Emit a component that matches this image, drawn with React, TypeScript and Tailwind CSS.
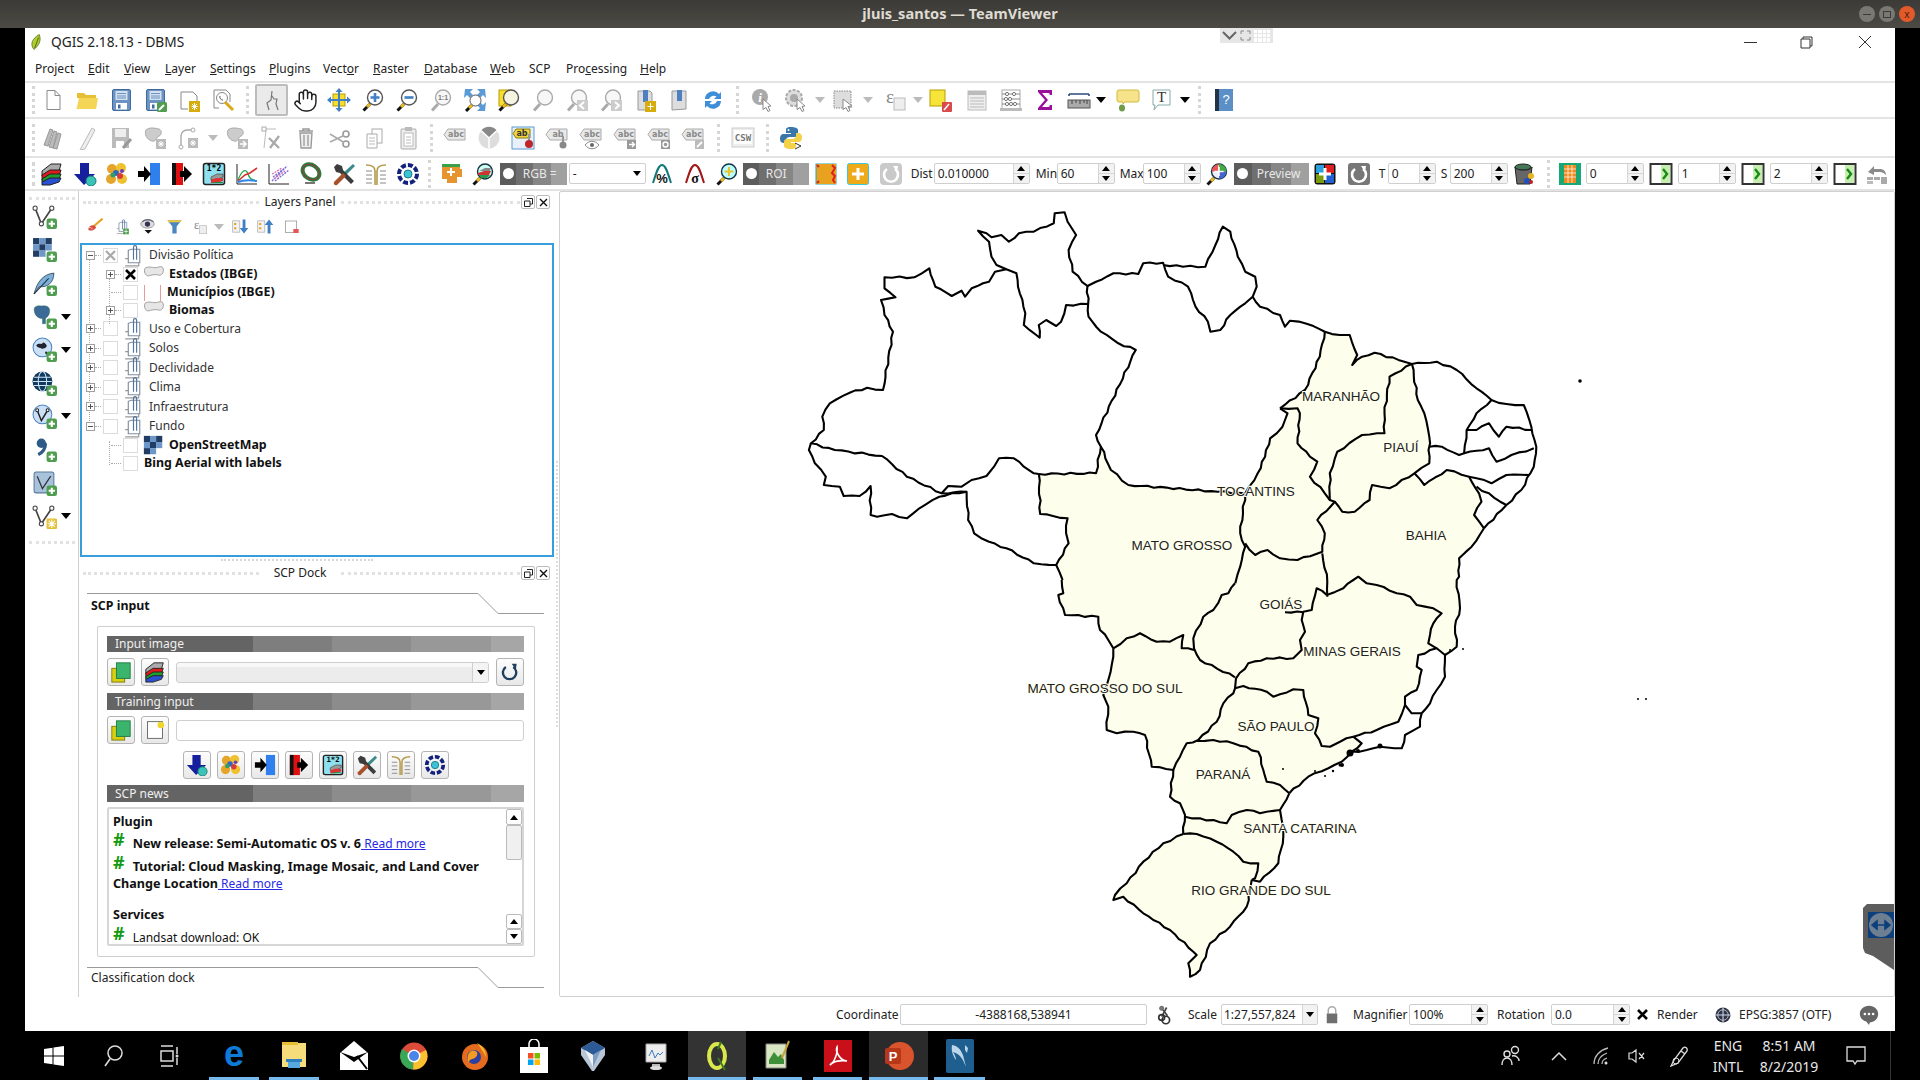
import React from 'react';
import { Hand } from 'lucide-react';

type P = [number, number];
const S = ({ s = 24, children }: { s?: number; children?: React.ReactNode }) => (
  <svg width={s} height={s} viewBox="0 0 24 24" className="block shrink-0">{children}</svg>
);
const mag = (lens: string, inner?: React.ReactNode, ring = '#555') => (
  <>
    <path d="M2.5 22.5L9 16" stroke="#111" strokeWidth="3" />
    <path d="M6 19L9 16" stroke="#e8b923" strokeWidth="3" />
    <circle cx="14" cy="9.5" r="7.5" fill={lens} stroke={ring} strokeWidth="1.4" />
    {inner}
  </>
);
const magGray = (inner?: React.ReactNode) => (
  <>
    <path d="M3 22.5L9 16" stroke="#aaa" strokeWidth="3" />
    <circle cx="14" cy="9.5" r="7.5" fill="#f7f7f7" stroke="#aaa" strokeWidth="1.4" />
    {inner}
  </>
);
const plus = <><rect x="14" y="14" width="10" height="10" rx="2" fill="#4f9e4f" /><path d="M19 16v6M16 19h6" stroke="#fff" strokeWidth="2" /></>;
const vnode = (c = '#444') => <path d="M3 4L9 19L19 4" fill="none" stroke={c} strokeWidth="1.6" />;
const vdots = <><circle cx="3" cy="4" r="2" fill="#fff" stroke="#444" /><circle cx="9" cy="19" r="2" fill="#fff" stroke="#444" /><circle cx="19" cy="4" r="2" fill="#fff" stroke="#444" /></>;
const abc = (t: string, c = '#aaa') => (
  <>
    <path d="M5 3h17v11H5L1 8.5z" fill="#e8e8e8" stroke={c} strokeWidth="1" />
    <text x="13" y="11" fontSize="8" fontWeight="700" textAnchor="middle" fill="#888" fontFamily="'DejaVu Sans'">{t}</text>
  </>
);
const floppy = (
  <>
    <rect x="3.5" y="1.5" width="18" height="21" rx="1.5" fill="#6b93c4" stroke="#3f6a9b" />
    <rect x="6.5" y="3" width="12" height="9" fill="#d5e0ee" />
    <path d="M8 5.5h9M8 8h9M8 10h9" stroke="#6b93c4" />
    <rect x="7" y="15" width="11" height="6.5" fill="#fff" />
    <rect x="9" y="16.5" width="2.5" height="4" fill="#3f6a9b" />
  </>
);
const stack = (
  <>
    <path d="M2 9L11 2h10l-2 7-9 5H2z" fill="#ababab" stroke="#222" />
    <path d="M2 13L10 8h11l-2 6-9 4H2z" fill="#e01b1b" stroke="#222" />
    <path d="M2 17L10 12h11l-2 5-9 3H2z" fill="#1f9d2f" stroke="#222" />
    <path d="M2 20L10 16h11l-2 4-9 3H2z" fill="#2a4fd1" stroke="#222" />
  </>
);
const yellowGreen = (
  <>
    <rect x="2" y="8" width="14" height="15" fill="#d8cf10" stroke="#7d7a0a" />
    <rect x="7" y="2" width="15" height="17" fill="#3bb56b" stroke="#1d7c43" />
  </>
);
const group = (
  <>
    <path d="M4 15h3M4 22h13v-3" fill="none" stroke="#999" strokeWidth="1.1" />
    <path d="M7 19V7l3-1h8v13z" fill="#fff" stroke="#7f8ea0" strokeWidth="1.1" />
    <path d="M12 16V4a1.500 1.500 0 0 1 3 0v12" fill="none" stroke="#4f739e" strokeWidth="1.1" />
  </>
);

const I: Record<string, React.ReactNode> = {
  qgis: <><path d="M8 22C2 15 6 7 15 2c3 8 0 14-7 20z" fill="#b3cc31" stroke="#4a6b14" /><path d="M9 20L14 6" stroke="#2e4a10" /></>,
  new: <><path d="M6 2.5h8l5 5v14H6z" fill="#fff" stroke="#8a8a8a" /><path d="M14 2.5v5h5" fill="none" stroke="#8a8a8a" /></>,
  open: <><path d="M2 10V5h7l2 2h10v4z" fill="#e6bf35" /><path d="M1.5 21L4 10h19l-2 11z" fill="#f5d556" /></>,
  save: floppy,
  saveas: <>{floppy}<rect x="14" y="14" width="10" height="10" rx="1.5" fill="#4f9e4f" /><path d="M16 22l5-5" stroke="#fff" strokeWidth="2" /></>,
  layout: <><path d="M4 4h12l4 4v7M11 21H4V4" fill="none" stroke="#888" /><rect x="12" y="13" width="11" height="11" fill="#d6ad0c" /><path d="M17.5 15v7M14.5 18.5h6M15 16l5 5M20 16l-5 5" stroke="#fff" /></>,
  manager: <><path d="M3 2h12l4 4v8M8 20H3V2" fill="none" stroke="#888" /><circle cx="11" cy="10" r="5.5" fill="#fff" stroke="#888" /><path d="M9 8a3 3 0 0 0 3 4" fill="none" stroke="#555" /><path d="M14 14l8 8" stroke="#d7aa1c" strokeWidth="3" /></>,
  touch: <path d="M12 3l-1 9-4 3 2 7M12 8l2 3h3l-1 5 2 6" fill="none" stroke="#777" strokeWidth="1.2" />,
  pansel: <><rect x="6" y="6" width="12" height="12" fill="#f7dd2e" stroke="#b99d00" /><path d="M12 0l3.5 4h-7zM12 24l3.5-4h-7zM0 12l4-3.5v7zM24 12l-4-3.5v7z" fill="#3f7fc4" /><path d="M12 4v16M4 12h16" stroke="#3f7fc4" strokeWidth="2" /></>,
  zin: mag('#fff', <path d="M14 5v9M9.5 9.5h9" stroke="#3f7fc4" strokeWidth="2.6" />),
  zout: mag('#fff', <path d="M9.5 9.5h9" stroke="#3f7fc4" strokeWidth="2.6" />),
  z11: magGray(<text x="14" y="12" fontSize="7" fontWeight="700" textAnchor="middle" fill="#777" fontFamily="'Liberation Sans'">1:1</text>),
  zfull: <><path d="M2 1h8L7 4l3 3-3 3-3-3-3 3zM22 1h-8l3 3-3 3 3 3 3-3 3 3zM22 23h-8l3-3-3-3 3-3 3 3 3-3z" fill="#5b9bd5" /><path d="M3 23l6-6" stroke="#111" strokeWidth="3" /><path d="M6 20l3-3" stroke="#e8b923" strokeWidth="3" /><circle cx="12.5" cy="12.5" r="5.5" fill="#fff" stroke="#555" /></>,
  zlayer: <><rect x="2" y="2" width="12" height="16" fill="#f7dd2e" stroke="#b99d00" />{mag('#f4f4e0')}</>,
  zsel: magGray(),
  zlast: <>{magGray()}<rect x="12" y="12" width="11" height="11" fill="#ccc" /><path d="M19 14l-4 3.5 4 3.5" fill="none" stroke="#fff" strokeWidth="2" /></>,
  znext: <>{magGray()}<rect x="12" y="12" width="11" height="11" fill="#ccc" /><path d="M16 14l4 3.5-4 3.5" fill="none" stroke="#fff" strokeWidth="2" /></>,
  bookstar: <><path d="M5 3h12l2 2v17H5z" fill="#ddd" stroke="#999" /><rect x="10" y="2" width="5" height="12" fill="#4c80c0" /><rect x="12" y="13" width="11" height="11" fill="#d6ad0c" /><path d="M17.5 15v7M14.5 18.5h6" stroke="#fff" /></>,
  book2: <><path d="M5 3h14v18l-14 1z" fill="#ddd" stroke="#999" /><rect x="10" y="2" width="5" height="11" fill="#4c80c0" /></>,
  refresh: <><path d="M4 11a8 8 0 0 1 14-5l2-2v7h-7l2.5-2.5A5 5 0 0 0 8 11z" fill="#3f8fd8" /><path d="M20 13a8 8 0 0 1-14 5l-2 2v-7h7l-2.5 2.5A5 5 0 0 0 16 13z" fill="#3f8fd8" /></>,
  identify: <><circle cx="10" cy="9" r="8" fill="#aaa" /><text x="10" y="14" fontSize="13" fontWeight="700" fontStyle="italic" textAnchor="middle" fill="#fff" fontFamily="'Liberation Serif'">i</text><path d="M13 11l8 7-3 .5 2 4-2 1-2-4-3 2z" fill="#fff" stroke="#888" /></>,
  action: <><circle cx="10" cy="10" r="8" fill="#ddd" stroke="#aaa" strokeWidth="2" strokeDasharray="3 1.5" /><circle cx="10" cy="10" r="4" fill="#aaa" /><path d="M13 11l8 7-3 .5 2 4-2 1-2-4-3 2z" fill="#fff" stroke="#888" /></>,
  select: <><rect x="2" y="3" width="17" height="17" fill="#ddd" stroke="#888" strokeDasharray="1.5 1" /><path d="M11 11l9 7-4 .5 2 4-2 1-2-4-3 2z" fill="#fff" stroke="#888" /></>,
  expr: <><text x="7" y="15" fontSize="19" textAnchor="middle" fill="#888" fontFamily="'Liberation Serif'">ε</text><rect x="11" y="10" width="11" height="12" fill="#eee" stroke="#bbb" /></>,
  desel: <><rect x="2" y="2" width="15" height="16" fill="#f7e43a" stroke="#b99d00" /><rect x="14" y="14" width="10" height="10" rx="1" fill="#d94b4b" /><path d="M16 22l5-6" stroke="#fff" strokeWidth="1.5" /></>,
  table: <><rect x="3" y="3" width="18" height="19" fill="#eee" stroke="#bbb" /><rect x="3" y="3" width="18" height="4" fill="#bbb" /><path d="M5 10h14M5 13h14M5 16h14M5 19h14" stroke="#bbb" /></>,
  abacus: <><rect x="3" y="2" width="18" height="19" fill="#fff" stroke="#aaa" /><rect x="1" y="20" width="22" height="3" fill="#bbb" /><path d="M3 6h18M3 11h18M3 16h18" stroke="#888" /><circle cx="8" cy="6" r="1.6" fill="#fff" stroke="#777" /><circle cx="15" cy="6" r="1.6" fill="#fff" stroke="#777" /><circle cx="7" cy="11" r="1.6" fill="#fff" stroke="#777" /><circle cx="11" cy="11" r="1.6" fill="#fff" stroke="#777" /><circle cx="8" cy="16" r="1.6" fill="#fff" stroke="#777" /><circle cx="12" cy="16" r="1.6" fill="#fff" stroke="#777" /><circle cx="16" cy="16" r="1.6" fill="#fff" stroke="#777" /></>,
  sigma: <path d="M5 2h14v5h-2l-1-2H9l6 7-6 7h7l1-2h2v5H5v-2l7-8-7-8z" fill="#9b109b" />,
  measure: <><path d="M2 6h20M2 6v2M22 6v2" stroke="#2d4b80" strokeWidth="1.6" /><rect x="1" y="12" width="22" height="8" fill="#aaa" stroke="#555" /><path d="M5 12v4M9 12v3M13 12v4M17 12v3M20 12v4" stroke="#444" /></>,
  tip: <><path d="M3 2h18a2 2 0 0 1 2 2v8a2 2 0 0 1-2 2H9l-2 2v-2H3a2 2 0 0 1-2-2V4a2 2 0 0 1 2-2z" fill="#f7e48a" stroke="#d1b93d" /><ellipse cx="6" cy="20" rx="3" ry="3.5" fill="#6f9c46" /></>,
  ttext: <><path d="M3 2h17v15H8l-4 5 1-5H3z" fill="#fff" stroke="#8aa" /><text x="11.5" y="14" fontSize="15" textAnchor="middle" fill="#333" fontFamily="'Liberation Serif'">T</text></>,
  help: <><rect x="3" y="1" width="18" height="22" fill="#5b8fc6" /><rect x="3" y="1" width="4" height="22" fill="#223247" /><text x="14" y="16" fontSize="13" textAnchor="middle" fill="#fff" fontFamily="'Liberation Sans'">?</text></>,
  pencils: <><path d="M3 19L9 3l3 1-5 16zM8 21l5-16 3 1-4 16zM12 22l5-15 3 1-4 15z" fill="#bbb" stroke="#999" /></>,
  pencil: <path d="M6 22L17 2l3 2L10 23l-5 1z" fill="#eee" stroke="#bbb" />,
  save2: <><path d="M3 2h17v20H3z" fill="#bbb" /><rect x="6" y="3" width="11" height="8" fill="#eee" /><rect x="7" y="15" width="8" height="7" fill="#fff" /><path d="M14 22l8-9" stroke="#999" strokeWidth="3" /></>,
  addfeat: <><path d="M3 4c3-3 9-2 13-1 3 1 3 6 0 7s-2 6-7 5-8-7-6-11z" fill="#ccc" stroke="#aaa" /><rect x="13" y="13" width="10" height="10" fill="#bbb" /><path d="M18 15v6M15 18h6M16 16l4 4M20 16l-4 4" stroke="#fff" /></>,
  node: <><path d="M4 21V10a6 6 0 0 1 6-6h6" fill="none" stroke="#aaa" strokeWidth="1.4" /><circle cx="4" cy="21" r="2" fill="#fff" stroke="#aaa" /><circle cx="16" cy="4" r="2" fill="#fff" stroke="#aaa" /><rect x="11" y="12" width="10" height="10" fill="#bbb" /><path d="M16 14v6M13 17h6M14 15l4 4M18 15l-4 4" stroke="#fff" /></>,
  move: <><path d="M3 4c3-3 9-2 13-1 3 1 3 6 0 7s-2 6-7 5-8-7-6-11z" fill="#ccc" stroke="#aaa" /><rect x="13" y="13" width="10" height="10" fill="#bbb" /><path d="M15 18h6M18 15l3 3-3 3" fill="none" stroke="#fff" strokeWidth="1.5" /></>,
  nodetool: <><path d="M5 3h12M7 4l-2 18" stroke="#bbb" fill="none" /><rect x="3" y="1" width="4" height="4" fill="#fff" stroke="#aaa" /><path d="M10 12l10 10M20 10L11 22" stroke="#aaa" strokeWidth="2.4" /></>,
  trash: <><path d="M5 5h14M9 5V3h6v2" fill="none" stroke="#999" strokeWidth="1.5" /><path d="M6 7h12l-1 15H7z" fill="#eee" stroke="#999" strokeWidth="1.3" /><path d="M10 9v11M14 9v11" stroke="#999" strokeWidth="1.3" /></>,
  scissors: <><circle cx="18" cy="8" r="3" fill="none" stroke="#999" strokeWidth="1.6" /><circle cx="18" cy="18" r="3" fill="none" stroke="#999" strokeWidth="1.6" /><path d="M16 9.5L2 16M16 16.5L2 8" stroke="#aaa" strokeWidth="1.6" /></>,
  copy: <><rect x="10" y="3" width="10" height="14" fill="#fff" stroke="#aaa" /><path d="M5 8h10v14H5z" fill="#fff" stroke="#aaa" /><path d="M7 12h6M7 15h6M7 18h6" stroke="#bbb" /></>,
  paste: <><rect x="5" y="3" width="15" height="20" rx="1" fill="#eee" stroke="#aaa" /><rect x="9" y="1" width="7" height="4" fill="#bbb" /><rect x="8" y="7" width="9" height="13" fill="#fff" stroke="#bbb" /><path d="M10 11h5M10 14h5M10 17h5" stroke="#bbb" /></>,
  abc1: abc('abc'),
  pie: <><circle cx="12" cy="12" r="10.5" fill="#ddd" /><path d="M12 12L4 4.5A10.5 10.5 0 0 1 20 4.5z" fill="#888" /><path d="M12 12v10" stroke="#fff" strokeWidth="1.5" /><path d="M12 12L4 4.5M12 12l8-7.5" stroke="#fff" strokeWidth="1.5" /></>,
  abpin: <><rect x="1" y="1" width="22" height="22" fill="#e8f1fb" stroke="#5b9bd5" /><path d="M5 3h14v9H5L2 7.5z" fill="#f2d43b" stroke="#8a7a10" /><text x="11" y="10" fontSize="8" fontWeight="700" textAnchor="middle" fill="#333" fontFamily="'DejaVu Sans'">ab</text><rect x="17" y="8" width="2" height="8" fill="#999" /><circle cx="18" cy="18" r="4" fill="#c0272d" /></>,
  abpin2: <>{abc('ab')}<rect x="17" y="10" width="2" height="7" fill="#999" /><circle cx="18" cy="19" r="3.5" fill="#888" /></>,
  abeye: <>{abc('abc')}<path d="M6 19c4-5 10-5 14 0-4 5-10 5-14 0z" fill="#fff" stroke="#888" /><circle cx="13" cy="19" r="2" fill="#666" /></>,
  abarrow: <>{abc('abc')}<rect x="14" y="14" width="9" height="9" fill="#999" /><path d="M16 18.5h5M19 16l2.5 2.5L19 21" fill="none" stroke="#fff" strokeWidth="1.4" /></>,
  abrot: <>{abc('abc')}<rect x="14" y="14" width="9" height="9" fill="#999" /><circle cx="18.5" cy="18.5" r="2.5" fill="none" stroke="#fff" strokeWidth="1.4" /></>,
  abpen: <>{abc('abc')}<rect x="14" y="14" width="9" height="9" fill="#bbb" /><path d="M16 21l5-5" stroke="#fff" strokeWidth="1.8" /></>,
  csw: <><rect x="1" y="2" width="22" height="19" fill="#eee" stroke="#ccc" /><rect x="3" y="4" width="18" height="14" fill="#fff" /><text x="12" y="15" fontSize="9" fontWeight="700" textAnchor="middle" fill="#777" fontFamily="'DejaVu Sans Mono'">CSW</text></>,
  python: <><path d="M12 1c-5 0-5 2-5 3v3h5v1H5c-3 0-4 2-4 5s2 4 4 4h2v-3c0-2 2-3 4-3h5c2 0 3-1 3-3V4c0-2-3-3-7-3z" fill="#3a77a8" /><path d="M12 23c5 0 5-2 5-3v-3h-5v-1h7c3 0 4-2 4-5s-2-4-4-4h-2v3c0 2-2 3-4 3H8c-2 0-3 1-3 3v4c0 2 3 3 7 3z" fill="#f4d147" /><circle cx="9.5" cy="4" r="1" fill="#fff" /><path d="M16 17l6 3-6 3" fill="none" stroke="#333" /></>,
  stack,
  download: <><path d="M7 1h9v11h6L11 23 1 12h6z" fill="#16209c" /><circle cx="18" cy="19" r="5" fill="#3cc3b8" stroke="#1c7d78" /></>,
  cluster: <><circle cx="7" cy="7" r="5" fill="#e5a52b" /><circle cx="16" cy="6" r="5" fill="#f0c12f" /><circle cx="6" cy="17" r="5" fill="#e5a52b" /><circle cx="17" cy="17" r="5" fill="#f0c12f" /><circle cx="11" cy="11" r="3" fill="#2e67c7" /><circle cx="15" cy="14" r="3" fill="#d83a3a" /><circle cx="8" cy="13" r="2.5" fill="#2e9f6b" /><circle cx="17" cy="9" r="2" fill="#6a3ebf" /></>,
  arrowin: <><rect x="13" y="1" width="10" height="22" fill="#2f80ed" /><path d="M1 9h6V4l7 8-7 8v-5H1z" fill="#000" /></>,
  redout: <><rect x="2" y="1" width="11" height="22" fill="#e11010" /><rect x="2" y="1" width="4" height="22" fill="#111" /><path d="M10 9h4V4l8 8-8 8v-5h-4z" fill="#000" /></>,
  calc: <><rect x="1.5" y="1.5" width="21" height="21" rx="2" fill="#8ee0ee" stroke="#222" strokeWidth="1.5" /><text x="12" y="9" fontSize="8" fontWeight="700" textAnchor="middle" fontFamily="'DejaVu Sans Mono'">1*2</text><path d="M9 15l6-3h6v3l-7 3H9z" fill="#999" stroke="#222" strokeWidth=".5" /><path d="M9 18l5-2h7v3l-7 2H9z" fill="#d33" /><path d="M9 21l5-1h7v1H9z" fill="#1a8f3a" /></>,
  plot: <><path d="M2 2v20h20" fill="none" stroke="#222" /><path d="M3 18c4-10 8-12 10-6s4 5 8 7" fill="none" stroke="#1fa84a" strokeWidth="1.3" /><path d="M3 19l7-6 5-2 7-5" fill="none" stroke="#d83030" strokeWidth="1.6" /><path d="M3 20c5-2 12-2 19-1" fill="none" stroke="#2e87e8" strokeWidth="2" /></>,
  scatter: <><path d="M2 2v20h20" fill="none" stroke="#222" /><path d="M5 19L20 4M6 15l12-9M8 19L22 8" stroke="#7c6cd6" strokeWidth="1.4" strokeDasharray="2 1" /><path d="M7 17L18 9M5 12l10-6" stroke="#d76cb0" strokeWidth="1.2" strokeDasharray="2 1" /></>,
  roiring: <><ellipse cx="12" cy="10" rx="9" ry="7" transform="rotate(35 12 10)" fill="none" stroke="#2d7a3d" strokeWidth="4" /><ellipse cx="12" cy="10" rx="9" ry="7" transform="rotate(35 12 10)" fill="none" stroke="#8a3f3f" strokeWidth="1" /><path d="M6 21h10" stroke="#777" strokeWidth="2" /></>,
  tools: <><path d="M21 2l2 2-10 10-3-2z" fill="#3a8a8a" /><path d="M2 5l3-3 5 2 1 4 11 11-3 3L8 11 4 10z" fill="#3c3c3c" /><path d="M2 20l9-9 3 3-9 9c-2 1-4-1-3-3z" fill="#a8502c" /></>,
  bookt: <><path d="M11 23V9C11 4 7 3 2 3M13 23V9c0-5 4-6 9-6" fill="none" stroke="#b39a4d" strokeWidth="1.6" /><path d="M2 9h6M2 13h6M2 17h6M2 21h6M16 9h6M16 13h6M16 17h6M16 21h6" stroke="#888" /></>,
  gear: <><circle cx="12" cy="12" r="9" fill="none" stroke="#12207e" strokeWidth="4" strokeDasharray="5 2" /><circle cx="12" cy="12" r="4" fill="#3cc3d8" stroke="#1c7d88" /></>,
  layerplus: <><path d="M3 2h18v5h2v8h-5v6H8v-4H3z" fill="#e59430" /><path d="M3 2h18v3H3z" fill="#3aa04a" /><path d="M8 10h8M12 6v8" stroke="#fff" strokeWidth="2" /></>,
  magrgb: <>{mag('#cfe', <><path d="M8 9l6-3h6l-1 3z" fill="#888" /><path d="M7 11l6-2h7l-2 4-11 0z" fill="#c33" /><path d="M8 13l11 0-3 3H10z" fill="#2a9a4a" /></>, '#134')}</>,
  pct: <><path d="M3 21C6 12 8 3 12 3s6 9 9 18" fill="none" stroke="#157a7a" strokeWidth="2" /><text x="12" y="21" fontSize="13" fontWeight="700" textAnchor="middle" fill="#111" fontFamily="'Liberation Sans'">%</text></>,
  sig: <><path d="M3 21C6 12 8 3 12 3s6 9 9 18" fill="none" stroke="#a01818" strokeWidth="2" /><text x="12" y="21" fontSize="14" fontWeight="700" textAnchor="middle" fill="#111" fontFamily="'Liberation Serif'">σ</text></>,
  magroi: mag('#bff', <path d="M14 5v9M9.5 9.5h9" stroke="#eec22f" strokeWidth="2" />, '#134'),
  polyx: <><rect x="2" y="2" width="20" height="20" fill="#e8a21f" stroke="#2aa6b8" /><path d="M2 2h20v20H2l6-5-2-5 3-5z" fill="#e8a21f" /><path d="M18 3l3 3-3 5 3 3-2 4 2 3M3 3l2 2M3 21l2-2" fill="none" stroke="#e02020" strokeWidth="2" /></>,
  oplus: <><rect x="1.5" y="1.5" width="21" height="21" rx="2" fill="#eeaa18" stroke="#3bc8dc" /><path d="M12 6v12M6 12h12" stroke="#fff" strokeWidth="3" /></>,
  undoG: <><rect x="1" y="1" width="22" height="22" rx="4" fill="#c9c9c9" /><path d="M8 7a7 7 0 1 0 8 0" fill="none" stroke="#fff" strokeWidth="2.6" /><path d="M14 4l5 0-1 6z" fill="#fff" /></>,
  magcolor: mag('#eef', <><path d="M14 2a7.5 7.5 0 0 0 0 7.5H7a7.5 7.5 0 0 1 7-7.5z" fill="#e55" /><path d="M14 2a7.5 7.5 0 0 1 7.5 7.5H14z" fill="#4a4" /><path d="M14 9.5h7.5a7.5 7.5 0 0 1-7.5 7.5z" fill="#46c" /><path d="M14 5v9M9.5 9.5h9" stroke="#fff" strokeWidth="1.5" /></>, '#134'),
  colorplus: <><rect x="1.5" y="1.5" width="21" height="21" rx="3" fill="#111" /><rect x="3" y="3" width="8" height="8" fill="#2aa0dd" /><rect x="12" y="3" width="9" height="8" fill="#e02020" /><rect x="3" y="12" width="8" height="9" fill="#7a9a10" /><rect x="12" y="12" width="9" height="9" fill="#2060d0" /><path d="M12 6v12M6 12h12" stroke="#fff" strokeWidth="3" /></>,
  undoD: <><rect x="1" y="1" width="22" height="22" rx="3" fill="#777" /><path d="M8 7a7 7 0 1 0 8 0" fill="none" stroke="#fff" strokeWidth="2.6" /><path d="M14 4l5 0-1 6z" fill="#fff" /></>,
  bin: <><ellipse cx="10" cy="5" rx="8" ry="3" fill="#475" stroke="#222" /><path d="M2 5l2 17h13l2-17a8 3 0 0 1-17 0z" fill="#666" stroke="#222" /><circle cx="18" cy="14" r="3" fill="#e8b31f" /><circle cx="14" cy="19" r="3" fill="#2050c0" /><circle cx="18" cy="20" r="2" fill="#c02020" /></>,
  gridO: <><rect x="1" y="1" width="22" height="22" fill="#18a878" /><rect x="6" y="3" width="12" height="18" fill="#f08a1f" /><path d="M6 7h12M6 11h12M6 15h12M10 3v18M14 3v18" stroke="#fff" strokeWidth=".7" /></>,
  gbtn: <><rect x="1.5" y="2" width="21" height="20" fill="#fff" stroke="#333" strokeWidth="2" /><rect x="12" y="3" width="9" height="18" fill="#c6eeb0" /><path d="M14 7l4 5-4 5" fill="none" stroke="#168a16" strokeWidth="2.4" /></>,
  lastg: <><path d="M3 10l6-6v3h6c3 0 6 2 6 6-2-2-4-3-6-3H9v3z" fill="#8a8a8a" /><rect x="2" y="15" width="6" height="3" fill="#aaa" /><rect x="9" y="15" width="6" height="3" fill="#aaa" /><rect x="2" y="19" width="6" height="3" fill="#bbb" /><rect x="16" y="15" width="6" height="7" fill="#aaa" /></>,
  vadd: <>{vnode()}{vdots}{plus}</>,
  radd: <><rect x="1" y="1" width="6" height="6" fill="#223d63" /><rect x="7" y="1" width="6" height="6" fill="#6c97c8" /><rect x="13" y="1" width="6" height="6" fill="#223d63" /><rect x="1" y="7" width="6" height="6" fill="#6c97c8" /><rect x="7" y="7" width="6" height="6" fill="#223d63" /><rect x="13" y="7" width="6" height="6" fill="#6c97c8" /><rect x="1" y="13" width="6" height="6" fill="#223d63" /><rect x="7" y="13" width="6" height="6" fill="#6c97c8" />{plus}</>,
  tile: <><rect x="1" y="1" width="7" height="7" fill="#223d63" /><rect x="8" y="1" width="7" height="7" fill="#6c97c8" /><rect x="15" y="1" width="7" height="7" fill="#223d63" /><rect x="1" y="8" width="7" height="7" fill="#6c97c8" /><rect x="8" y="8" width="7" height="7" fill="#223d63" /><rect x="15" y="8" width="7" height="7" fill="#6c97c8" /><rect x="1" y="15" width="7" height="7" fill="#223d63" /><rect x="8" y="15" width="7" height="7" fill="#6c97c8" /></>,
  feather: <><path d="M2 22C5 10 11 3 21 2c0 9-6 14-14 13z" fill="#7db0d8" stroke="#345" strokeWidth=".8" /><path d="M2 22L16 7" stroke="#234" />{plus}</>,
  pg: <><path d="M2 5c0-3 4-4 7-3 3-1 8 0 8 4 0 5-2 6-4 8v5h-3v-5c-4 0-8-3-8-9z" fill="#3c6a96" stroke="#163" strokeWidth=".3" />{plus}</>,
  wms: <><circle cx="10" cy="10" r="9" fill="#cbe0f5" stroke="#4f86c0" /><path d="M4 8c3-3 5 0 6-2s3 0 4 2-3 4-5 3-3 0-5-3zM13 14c2 0 3 1 2 3-2 0-3-1-2-3z" fill="#223" />{plus}</>,
  globe: <><circle cx="10" cy="10" r="9.5" fill="#123a5a" /><ellipse cx="10" cy="10" rx="4" ry="9.5" fill="none" stroke="#cfe6ff" /><path d="M1 10h18M2 6h16M2 14h16" stroke="#cfe6ff" />{plus}</>,
  wfs: <><circle cx="10" cy="10" r="9" fill="#cbe0f5" stroke="#4f86c0" /><path d="M5 6l4 10 6-10" fill="none" stroke="#222" strokeWidth="1.4" /><circle cx="5" cy="6" r="1.4" fill="#fff" stroke="#222" /><circle cx="15" cy="6" r="1.4" fill="#fff" stroke="#222" />{plus}</>,
  comma: <><circle cx="9" cy="6" r="4.5" fill="#2d5a86" /><path d="M13 6c0 6-3 9-7 11" fill="none" stroke="#2d5a86" strokeWidth="3" />{plus}</>,
  vmap: <><rect x="2" y="1" width="19" height="20" rx="2" fill="#a9c2dc" stroke="#5a7a9a" /><path d="M5 5l5 12 8-12" fill="none" stroke="#333" strokeWidth="1.2" />{plus}</>,
  vstar: <>{vnode()}{vdots}<rect x="14" y="14" width="10" height="10" rx="1" fill="#e6bf35" /><path d="M19 15v8M15 19h8M16 16l6 6M22 16l-6 6" stroke="#fff" /></>,
  brush: <><path d="M22 1L9 12" stroke="#e8a21f" strokeWidth="3" /><path d="M2 14c3-5 8-5 11-1-2 4-7 6-11 4z" fill="#d84a3a" /><path d="M2 14c2-1 4-1 6 2" fill="none" stroke="#fff" /></>,
  addg: <>{group}<rect x="13" y="15" width="8" height="8" fill="#4f9e4f" /><path d="M17 16v6M14 19h6" stroke="#fff" /></>,
  eye: <><ellipse cx="10" cy="8" rx="9" ry="5.5" fill="#ddd" stroke="#888" /><circle cx="10" cy="8" r="3.5" fill="#335" /><path d="M6 16l5 5 5-5z" fill="#111" /><path d="M3 5c5-4 11-3 15 0" fill="none" stroke="#667" strokeWidth="1.5" /></>,
  funnel: <><path d="M2 3h20l-7 9v10h-6V12z" fill="#4c86c0" /><path d="M2 3h20l-2 3H4z" fill="#f2c93b" /></>,
  expand: <><rect x="1" y="4" width="10" height="16" fill="#f3f3f3" stroke="#aaa" /><path d="M3 7h3v3H3zM3 13h3v3H3z" fill="#e8a21f" /><path d="M15 2v12H11l6 8 6-8h-4V2z" fill="#3f7fc4" /></>,
  collapse: <><rect x="1" y="4" width="10" height="16" fill="#f3f3f3" stroke="#aaa" /><path d="M3 7h3v3H3zM3 13h3v3H3z" fill="#e8a21f" /><path d="M15 22V10H11l6-8 6 8h-4v12z" fill="#3f7fc4" /></>,
  remove: <><rect x="2" y="3" width="17" height="17" fill="#fff" stroke="#888" /><rect x="14" y="15" width="8" height="6" fill="#e25555" /></>,
  yg: yellowGreen,
  newroi: <><rect x="3" y="2" width="18" height="20" fill="#fff" stroke="#555" /><circle cx="19" cy="6" r="4" fill="#f0d52a" /></>,
  undoB: <><path d="M7 6a8 8 0 1 0 9 0" fill="none" stroke="#1f3f5f" strokeWidth="2.8" /><path d="M14 2h6l-1 7z" fill="#1f3f5f" /></>,
  lockpad: <><path d="M7 10V6a5 5 0 0 1 10 0v4" fill="none" stroke="#aaa" strokeWidth="2" /><rect x="5" y="10" width="14" height="13" fill="#6e6e6e" /></>,
  rpen: <><path d="M8 4l7 9M14 3l-6 11" stroke="#444" strokeWidth="2" /><circle cx="8" cy="4" r="3" fill="#777" /><circle cx="13" cy="18" r="4.5" fill="none" stroke="#333" strokeWidth="2" /><circle cx="8" cy="15" r="3.5" fill="none" stroke="#333" strokeWidth="2" /></>,
  epsg: <><circle cx="12" cy="12" r="10" fill="#334" /><path d="M12 2v20M2 12h20" stroke="#cde" strokeWidth="1.4" /><path d="M12 5a7 7 0 0 0 0 14 7 7 0 0 0 0-14" fill="none" stroke="#cde" /></>,
  chat: <><path d="M12 2c6 0 10 4 10 9s-4 9-9 9l-1 3-3-4c-4-1-7-4-7-8 0-5 4-9 10-9z" fill="#666" /><circle cx="7.5" cy="11" r="1.4" fill="#fff" /><circle cx="12" cy="11" r="1.4" fill="#fff" /><circle cx="16.5" cy="11" r="1.4" fill="#fff" /></>,
};
const Ico = ({ n, s = 24 }: { n: string; s?: number }) => <S s={s}>{I[n]}</S>;

const Cell = ({ n, w = 'w-[34px]', c = '', s = 24 }: { n: string; w?: string; c?: string; s?: number }) => (
  <div className={`flex shrink-0 items-center justify-center ${w} ${c}`}><Ico n={n} s={s} /></div>
);
const Tri = ({ w = 'w-[14px]', gray = false, c = '' }: { w?: string; gray?: boolean; c?: string }) => (
  <div className={`flex shrink-0 items-center justify-center ${w} ${c}`}>
    <div className={`h-0 w-0 border-x-[5px] border-t-[6px] border-x-transparent ${gray ? 'border-t-[#bbb]' : 'border-t-black'}`} />
  </div>
);
const Sep = ({ w }: { w: string }) => (
  <div className={`flex shrink-0 justify-center ${w}`}><div className="h-[28px] w-0 border-l-[3px] border-dotted border-[#d6d6d6]" /></div>
);
const Band = ({ w, h, t, c = '' }: { w: string; h: string; t: string; c?: string }) => (
  <div className={`flex shrink-0 items-center bg-[linear-gradient(90deg,#646464_0_35%,#7e7e7e_35%_54%,#8c8c8c_54%_73%,#989898_73%_92%,#a6a6a6_92%)] text-[12px] text-[#f0f0f0] ${w} ${h} ${c}`}>{t}</div>
);
const Radio = ({ w, t, c = '' }: { w: string; t: string; c?: string }) => (
  <div className={`flex h-[22px] shrink-0 items-center bg-[linear-gradient(90deg,#5c5c5c_0_24%,#6f6f6f_24%_50%,#868686_50%_76%,#a0a0a0_76%)] pl-[2px] text-[12px] text-[#e8e8e8] ${w} ${c}`}>
    <div className="ml-[1px] mr-[9px] h-[11px] w-[11px] rounded-full bg-white" />{t}
  </div>
);
const Spin = ({ w, v, c = '', a = 'w-[16px]' }: { w: string; v: string; c?: string; a?: string }) => (
  <div className={`flex h-[21px] shrink-0 items-center overflow-hidden rounded-[2px] border border-[#cfcfcf] bg-white text-[12px] text-[#222] ${w} ${c}`}>
    <div className="flex-1 pl-[3px]">{v}</div>
    <div className={`flex h-full flex-col border-l border-[#d5d5d5] bg-[#f2f2f2] ${a}`}>
      <div className="flex flex-1 items-center justify-center border-b border-[#d5d5d5]"><div className="h-0 w-0 border-x-[4px] border-b-[5px] border-x-transparent border-b-black" /></div>
      <div className="flex flex-1 items-center justify-center"><div className="h-0 w-0 border-x-[4px] border-t-[5px] border-x-transparent border-t-black" /></div>
    </div>
  </div>
);
const Lbl = ({ w, t, c = '' }: { w: string; t: string; c?: string }) => <div className={`shrink-0 whitespace-nowrap text-[12px] text-[#222] ${w} ${c}`}>{t}</div>;

const menu: [string, string, string, string][] = [
  ['w-[53px]', 'Pro', 'j', 'ect'], ['w-[36px]', '', 'E', 'dit'], ['w-[41px]', '', 'V', 'iew'], ['w-[45px]', '', 'L', 'ayer'],
  ['w-[59px]', '', 'S', 'ettings'], ['w-[54px]', '', 'P', 'lugins'], ['w-[50px]', 'Vect', 'o', 'r'], ['w-[51px]', '', 'R', 'aster'],
  ['w-[66px]', '', 'D', 'atabase'], ['w-[39px]', '', 'W', 'eb'], ['w-[37px]', 'SCP', '', ''], ['w-[74px]', 'Pro', 'c', 'essing'], ['w-[40px]', '', 'H', 'elp'],
];

const DockHead = ({ t, c = '' }: { t: string; c?: string }) => (
  <div className={`flex h-[22px] shrink-0 items-center ${c}`}>
    <div className="ml-[3px] w-[176px] border-t-[3px] border-dotted border-[#e2e2e2]" />
    <div className="w-[82px] text-center text-[12px] text-[#222]">{t}</div>
    <div className="w-[179px] border-t-[3px] border-dotted border-[#e2e2e2]" />
    <div className="ml-[1px] flex h-[14px] w-[14px] items-center justify-center rounded-[2px] border border-[#bbb]">
      <svg width="9" height="9" viewBox="0 0 9 9"><path d="M3 .5h5.500V6H6M.5 3H6v5.500H.5z" fill="none" stroke="#222" /></svg>
    </div>
    <div className="ml-px flex h-[14px] w-[14px] items-center justify-center rounded-[2px] border border-[#bbb]">
      <svg width="9" height="9" viewBox="0 0 9 9"><path d="M1 1l7 7M8 1L1 8" stroke="#111" strokeWidth="1.4" /></svg>
    </div>
  </div>
);

const Check = ({ x = 0 }: { x?: 0 | 1 | 2 }) => (
  <div className="flex h-[15px] w-[15px] shrink-0 items-center justify-center border border-[#dcdcdc] bg-white">
    {x === 2 && <svg width="13" height="13" viewBox="0 0 13 13"><path d="M2 2l9 9M11 2l-9 9" stroke="#000" strokeWidth="2.6" /></svg>}
    {x === 1 && <svg width="13" height="13" viewBox="0 0 13 13"><path d="M2 2l9 9M11 2l-9 9" stroke="#aaa" strokeWidth="2.2" /></svg>}
  </div>
);
const Exp = ({ open = false, none = false }: { open?: boolean; none?: boolean }) => (
  <div className="flex w-[17px] shrink-0 items-center">
    {none ? <div className="w-[9px]" /> : (
      <div className="relative h-[9px] w-[9px] border border-[#a0a0a0] bg-white">
        <div className="absolute left-[1px] top-[3px] h-px w-[5px] bg-[#555]" />
        {!open && <div className="absolute left-[3px] top-[1px] h-[5px] w-px bg-[#555]" />}
      </div>
    )}
    <div className={`border-t border-dotted border-[#aaa] ${none ? 'ml-[-4px] w-[10px]' : 'w-[6px]'}`} />
  </div>
);
const blob = <path d="M2 5c3-3 8-1 11-1 4 0 8-3 9 1 1 5-2 8-5 7-4-1-8 0-11 1-4 0-5-5-4-8z" fill="#e6e6e6" stroke="#999" />;
const Row = ({ h, d, ex, x, ic, t, b, iw = 'w-[31px]' }: { h: string; d: 0 | 1; ex?: 'o' | 'c'; x?: 0 | 1 | 2; ic?: React.ReactNode; t: string; b?: boolean; iw?: string }) => (
  <div className={`flex shrink-0 items-center ${h}`}>
    <div className={d === 0 ? 'w-[4px] shrink-0' : 'w-[24px] shrink-0'} />
    <Exp open={ex === 'o'} none={!ex} />
    <Check x={x} />
    <div className={`flex shrink-0 items-center justify-center ${iw}`}>{ic}</div>
    <div className={`whitespace-nowrap ${b ? 'text-[12.4px] font-bold text-[#111]' : 'text-[12px] text-[#333]'}`}>{t}</div>
  </div>
);

const SBtn = ({ n, s = 22 }: { n: string; s?: number }) => (
  <div className="flex h-[28px] w-[28px] shrink-0 items-center justify-center rounded-[3px] border border-[#b4b4b4] bg-[linear-gradient(#fdfdfd,#e8e8e8)]"><Ico n={n} s={s} /></div>
);
const TabShape = () => (
  <svg width="460" height="21" viewBox="0 0 460 21" className="block shrink-0"><path d="M0 .5h391l20 20h46" fill="none" stroke="#9a9a9a" /></svg>
);
const Hash = () => <span className="mr-[8px] inline-block align-[2px] text-[18px] font-bold leading-[14px] text-[#129a12]">#</span>;
const A = ({ t }: { t: string }) => <span className="text-[12px] font-normal text-[#2a2ae6] underline">{t}</span>;

/* ---- map ---- */
const a = (p: number[][]): P[] => p.map(([x, y]) => [790 + x * 0.4975, 200 + y / 3]);
const b = (p: number[][]): P[] => p.map(([x, y]) => [1000 + x / 3, 580 + y / 3]);
const wig = (p: P[]): string => {
  const o: string[] = [];
  p.forEach((q, i) => {
    if (i === 0) { o.push(`M${q[0].toFixed(1)} ${q[1].toFixed(1)}`); return; }
    const r = p[i - 1]; const dx = q[0] - r[0]; const dy = q[1] - r[1]; const l = Math.hypot(dx, dy);
    if (l < 0.01) return;
    const n = Math.max(1, Math.floor(l / 6));
    for (let k = 1; k <= n; k++) {
      const t = k / n; const j = k === n ? 0 : Math.sin(q[0] * 1.7 + k * 2.3 + q[1]) * 0.9;
      o.push(`L${(r[0] + dx * t - (dy / l) * j).toFixed(1)} ${(r[1] + dy * t + (dx / l) * j).toFixed(1)}`);
    }
  });
  return o.join('');
};
const coastNE = a([[1075,395],[1105,405],[1125,405],[1140,465],[1130,495],[1150,470],[1175,458],[1235,485],[1250,492]]);
const piEast = a([[1250,492],[1262,600],[1275,640],[1285,710],[1285,790],[1255,820]]);
const baNorth = a([[1255,820],[1275,855],[1320,810],[1365,830],[1385,880],[1390,905],[1375,945],[1395,985]]);
const baCoast: P[] = [...a([[1395,985],[1370,1040],[1345,1075],[1345,1130]]), ...b([[1370,0],[1380,85],[1365,140],[1370,200],[1335,225]])];
const mgEast = b([[1335,225],[1310,205],[1255,225],[1250,260],[1265,270],[1250,330],[1215,350],[1215,375],[1195,425],[1130,450],[1060,470]]);
const spCoast = b([[1060,470],[1085,490],[1055,515],[1025,545],[985,565],[925,590],[868,640]]);
const scCoast = b([[868,640],[840,690],[845,720],[850,770],[835,850],[780,905],[755,900]]);
const rsOut = b([[755,900],[740,980],[690,1040],[630,1090],[600,1170],[570,1190],[565,1150],[590,1125],[580,1115],[510,1050],[460,1020],[430,1000],[370,950],[340,960],[345,945],[380,910],[430,845],[490,790],[550,762]]);
const prW = b([[550,762],[555,705],[540,670],[510,650],[520,570]]);
const msS = b([[520,570],[455,560],[435,465],[400,455],[350,460],[320,450],[325,380],[310,345],[325,300],[340,230],[340,205]]);
const mtSW = b([[340,205],[325,180],[300,150],[295,110],[195,105],[175,45],[190,40],[185,0]]);
const mtW = a([[548,1140],[535,1095],[560,1030],[555,1000],[558,955],[503,942],[500,822]]);
const mtN = a([[500,822],[615,820],[625,740],[645,810],[680,855],[860,875],[915,880]]);
const toW = a([[915,880],[940,820],[955,770],[965,715],[990,680],[1000,640],[985,625]]);
const maW = a([[985,625],[1035,570],[1065,470],[1075,395]]);
const fillPath = wig([...coastNE, ...piEast, ...baNorth, ...baCoast, ...mgEast, ...spCoast, ...scCoast, ...rsOut, ...prW, ...msS, ...mtSW, ...mtW, ...mtN, ...toW, ...maW]);
const lines: P[][] = [
  coastNE, piEast, baNorth, baCoast, mgEast, spCoast, scCoast, rsOut, prW, msS, mtSW, mtW, mtN, toW, maW,
  // Roraima
  a([[598,258],[568,215],[560,150],[575,105],[558,65],[552,37],[532,40],[530,70],[490,95],[460,100],[440,125],[425,105],[405,112],[395,100],[378,92],[400,125],[405,170],[415,195],[435,208],[455,220],[462,280],[473,340],[470,375],[495,405],[502,413],[500,375],[515,360],[535,378],[545,365],[555,315],[600,312]]),
  // Amazonas
  a([[435,208],[412,215],[400,245],[365,265],[352,290],[345,272],[325,288],[292,260],[280,205],[265,220],[250,232],[190,232],[190,265],[212,292],[183,300],[190,345],[207,395],[187,570],[155,563],[120,578],[80,610],[65,650],[68,690],[42,730],[90,750],[185,768],[235,830],[305,880],[318,858],[345,860],[365,840],[395,828],[410,800],[420,775],[450,775],[470,800],[490,820],[500,822]]),
  // Para west
  a([[598,258],[600,350],[625,395],[660,430],[695,450],[615,705],[625,740]]),
  // Acre
  a([[42,730],[38,750],[50,790],[72,830],[68,855],[100,860],[108,888],[140,888],[162,858],[162,945],[175,950],[205,942],[235,955],[260,925],[300,890],[325,880],[355,875]]),
  // Rondonia
  a([[305,880],[355,875],[358,960],[370,1000],[400,1025],[435,1045],[490,1090],[535,1095]]),
  // Para north + Amapa
  a([[598,258],[615,245],[650,220],[700,222],[710,190],[750,188],[760,230],[800,260],[815,320],[840,365],[845,395],[865,390],[885,345],[915,310],[930,290],[938,260],[935,230],[915,215],[900,170],[885,95],[870,80],[855,135],[835,200],[790,200],[750,195]]),
  a([[930,290],[945,320],[985,345],[995,380],[1005,362],[1040,372],[1075,395]]),
  // To east
  a([[985,625],[1020,625],[1025,640],[1020,730],[1045,770],[1060,785],[1045,830],[1075,880],[1085,900],[1095,905],[1060,960],[1075,1000],[1070,1055],[1020,1080],[985,1075],[960,1050],[935,1065],[915,1030]]),
  a([[915,880],[905,1000],[915,1040],[905,1100],[895,1150]]),
  // Ma/Pi
  a([[1250,492],[1205,530],[1195,640],[1195,700],[1150,705],[1100,755],[1085,820],[1085,900]]),
  a([[1095,905],[1110,935],[1135,935],[1165,900],[1170,855],[1205,865],[1255,820]]),
  // Ba west
  a([[1070,1060],[1080,1145],[1080,1190]]),
  // NE
  a([[1250,492],[1300,485],[1340,510],[1380,565],[1410,600],[1440,612],[1475,615],[1490,680],[1500,740],[1495,800],[1470,870],[1440,915],[1395,985]]),
  a([[1410,600],[1380,640],[1360,690],[1355,760],[1345,765],[1310,740],[1285,740]]),
  a([[1490,690],[1440,680],[1425,710],[1405,670],[1380,690],[1360,690]]),
  a([[1495,745],[1450,765],[1420,785],[1405,745],[1355,760]]),
  a([[1365,830],[1380,835],[1410,850],[1440,825],[1485,825]]),
  a([[1380,860],[1440,915]]),
  // Goias
  b([[705,10],[685,40],[665,45],[640,90],[610,110],[580,175],[582,205],[600,240],[705,292]]),
  b([[582,210],[545,205],[550,165],[510,185],[470,185],[420,160],[380,175],[340,205]]),
  b([[980,45],[950,25],[938,70],[935,90],[910,95],[905,120],[915,155],[900,180],[905,210],[880,235],[800,235],[745,250],[708,295],[705,325],[700,340],[670,370],[650,425],[595,480]]),
  b([[855,97],[910,97]]),
  // Ba/Mg
  b([[980,45],[1030,25],[1060,0],[1075,-10],[1100,10],[1130,15],[1190,40],[1230,50],[1250,75],[1300,85],[1325,100],[1300,130],[1290,165],[1285,190],[1310,205]]),
  // Sp
  b([[705,325],[730,318],[800,335],[820,350],[880,328],[910,330],[925,405],[955,415],[945,460],[965,498],[990,500],[1020,485],[1060,470]]),
  // Es/Rj
  b([[1335,225],[1335,290],[1310,330],[1290,370],[1265,400],[1260,440],[1215,465],[1205,505],[1140,500],[1100,510],[1055,515]]),
  b([[1215,375],[1235,400],[1265,400]]),
  // Pr
  b([[595,480],[560,490],[540,530],[520,570]]),
  b([[590,483],[640,480],[700,490],[775,515],[790,570],[800,605],[840,615],[868,640]]),
  b([[555,710],[600,715],[680,730],[695,705],[740,690],[780,700],[840,690]]),
  b([[550,762],[590,762],[650,785],[700,815],[730,845],[775,850],[765,895],[755,900]]),
];
const dots: [number, number, number][] = [[1580,381,1.8],[1463,649,1],[1638,699,1],[1646,699,1],[1350,753,3.5],[1358,751,2],[1380,746,2.5],[1342,765,2],[1315,771,1],[1325,776,1],[1333,771,1.2],[1340,765,1.5],[1450,650,1],[1283,769,1]];
const labels: [string, number, number][] = [
  ['MARANHÃO', 1341, 396], ['PIAUÍ', 1401, 447], ['TOCANTINS', 1256, 491], ['MATO GROSSO', 1182, 545], ['BAHIA', 1426, 535],
  ['GOIÁS', 1281, 604], ['MINAS GERAIS', 1352, 651], ['MATO GROSSO DO SUL', 1105, 688], ['SÃO PAULO', 1276, 726], ['PARANÁ', 1223, 774],
  ['SANTA CATARINA', 1300, 828], ['RIO GRANDE DO SUL', 1261, 890],
];
const BrazilMap = () => (
  <svg width="1335" height="805" viewBox="560 192 1335 805" className="block">
    <path d={fillPath} fill="#fefeec" />
    {lines.map((l, i) => <path key={i} d={wig(l)} fill="none" stroke="#000" strokeWidth="2.1" strokeLinejoin="round" />)}
    {dots.map(([x, y, r], i) => <circle key={i} cx={x} cy={y} r={r} fill="#000" />)}
    {labels.map(([t, x, y]) => (
      <text key={t} x={x} y={y + 5} textAnchor="middle" fontSize="13.5" fill="#222" stroke="#fefeec" strokeWidth="2" paintOrder="stroke" fontFamily="'Liberation Sans', Arial, sans-serif">{t}</text>
    ))}
  </svg>
);

function Task({ w, c = '', line = false, children }: { w: string; c?: string; line?: boolean; children?: React.ReactNode }) {
  return (
    <div className={`relative flex h-full shrink-0 items-center justify-center ${w} ${c}`}>
      {children}
      {line && <div className="absolute inset-x-0 bottom-0 h-[3px] bg-[#76b9ed]" />}
    </div>
  );
}

export default function App() {
  return (
    <div className="relative flex h-[1080px] w-[1920px] flex-col overflow-hidden bg-black [font-family:'Noto_Sans',sans-serif]">
      {/* ubuntu title */}
      <div className="relative flex h-[28px] shrink-0 items-center justify-center bg-[linear-gradient(#3b3a36,#4c4a45)]">
        <div className="text-[14.6px] font-bold text-[#dfdbd2]">jluis_santos — TeamViewer</div>
        <div className="absolute right-[5px] top-[6px] flex gap-[4px]">
          <div className="flex h-[16px] w-[16px] items-center justify-center rounded-full bg-[#7a7872]"><div className="h-px w-[8px] bg-[#3c3b37]" /></div>
          <div className="flex h-[16px] w-[16px] items-center justify-center rounded-full bg-[#7a7872]"><div className="h-[7px] w-[8px] border border-[#3c3b37]" /></div>
          <div className="flex h-[16px] w-[16px] items-center justify-center rounded-full bg-[#e2592a] text-[10px] leading-none text-[#4a2010]">x</div>
        </div>
      </div>
      <div className="flex min-h-0 flex-1">
        <div className="w-[25px] shrink-0" />
        <div className="relative flex w-[1870px] flex-col bg-white">
          {/* TeamViewer handle */}
          <div className="absolute left-[1195px] top-0 flex h-[15px] w-[53px] items-center gap-[3px] bg-[#e6e6e6] pl-[2px]">
            <svg width="15" height="9" viewBox="0 0 15 9"><path d="M1 1l6.500 6.500L14 1" fill="none" stroke="#666" strokeWidth="2" /></svg>
            <svg width="11" height="11" viewBox="0 0 11 11"><path d="M1 4V1h3M7 1h3v3M10 7v3H7M4 10H1V7" fill="none" stroke="#888" /></svg>
            <div className="grid h-[12px] w-[16px] grid-cols-4 gap-px">{Array.from({ length: 12 }).map((_, i) => <div key={i} className="bg-white" />)}</div>
          </div>
          {/* QGIS title */}
          <div className="flex h-[28px] shrink-0 items-center pl-[3px]">
            <Ico n="qgis" s={18} />
            <div className="ml-[5px] text-[13.7px] text-[#222]">QGIS 2.18.13 - DBMS</div>
            <div className="ml-auto flex items-center pr-[23px]">
              <div className="h-px w-[13px] bg-[#333]" />
              <svg width="13" height="13" viewBox="0 0 13 13" className="ml-[43px]"><path d="M3 3V1h9v9h-2M1 3h9v9H1z" fill="none" stroke="#333" /></svg>
              <svg width="14" height="14" viewBox="0 0 14 14" className="ml-[45px]"><path d="M1 1l12 12M13 1L1 13" stroke="#333" /></svg>
            </div>
          </div>
          {/* menu */}
          <div className="flex h-[25px] shrink-0 items-center pl-[10px] text-[12px] text-[#222]">
            {menu.map(([w, p, u, e]) => <div key={p + u + e} className={`shrink-0 ${w}`}>{p}{u && <u>{u}</u>}{e}</div>)}
          </div>
          {/* toolbar 1 */}
          <div className="flex h-[38px] shrink-0 items-center border-y-2 border-[#e3e3e3] pl-[7px]">
            <div className="mr-[1px] h-[28px] w-[3px] border-l-[3px] border-dotted border-[#d6d6d6]" />
            {['new', 'open', 'save', 'saveas', 'layout', 'manager'].map((n) => <Cell key={n} n={n} />)}
            <Sep w="w-[15px]" />
            <div className="flex h-[32px] w-[33px] shrink-0 items-center justify-center rounded-[2px] border-2 border-[#bdbdbd] bg-[#eaeaea]"><Ico n="touch" /></div>
            <div className="flex w-[34px] shrink-0 items-center justify-center"><Hand size={25} strokeWidth={1.4} color="#222" /></div>
            {['pansel', 'zin', 'zout', 'z11', 'zfull', 'zlayer', 'zsel', 'zlast', 'znext', 'bookstar', 'book2', 'refresh'].map((n) => <Cell key={n} n={n} />)}
            <Sep w="w-[15px]" />
            <Cell n="identify" />
            <Cell n="action" /><Tri gray />
            <Cell n="select" /><Tri gray />
            <Cell n="expr" c="ml-[3px]" /><Tri gray w="w-[11px]" />
            <Cell n="desel" />
            <Cell n="table" c="ml-[3px]" />
            <Cell n="abacus" />
            <Cell n="sigma" />
            <Cell n="measure" /><Tri w="w-[10px]" />
            <Cell n="tip" c="ml-[5px]" />
            <Cell n="ttext" /><Tri w="w-[12px]" />
            <Sep w="w-[16px]" />
            <Cell n="help" />
          </div>
          {/* toolbar 2 */}
          <div className="flex h-[37px] shrink-0 items-center pl-[7px]">
            <div className="mr-[1px] h-[28px] w-[3px] border-l-[3px] border-dotted border-[#d6d6d6]" />
            {['pencils', 'pencil', 'save2', 'addfeat', 'node'].map((n) => <Cell key={n} n={n} />)}
            <Tri gray />
            {['move', 'nodetool'].map((n) => <Cell key={n} n={n} />)}
            <div className="w-px shrink-0" />
            {['trash', 'scissors', 'copy', 'paste'].map((n) => <Cell key={n} n={n} />)}
            <Sep w="w-[13px]" />
            {['abc1', 'pie', 'abpin', 'abpin2', 'abeye', 'abarrow', 'abrot', 'abpen'].map((n) => <Cell key={n} n={n} />)}
            <Sep w="w-[16px]" />
            <Cell n="csw" />
            <Sep w="w-[14px]" />
            <Cell n="python" />
          </div>
          {/* toolbar 3 */}
          <div className="flex h-[35px] shrink-0 items-center border-y-2 border-[#e3e3e3] pl-[7px]">
            <div className="mr-[1px] h-[24px] w-[3px] border-l-[3px] border-dotted border-[#d6d6d6]" />
            {['stack', 'download', 'cluster', 'arrowin', 'redout', 'calc', 'plot', 'scatter', 'roiring', 'tools', 'bookt', 'gear'].map((n) => <Cell key={n} n={n} w="w-[32.4px]" />)}
            <Sep w="w-[10px]" />
            <Cell n="layerplus" w="w-[32px]" />
            <Cell n="magrgb" w="w-[32px]" />
            <Radio w="w-[67px]" t="RGB =" c="ml-px" />
            <div className="ml-[2px] flex h-[21px] w-[77px] shrink-0 items-center rounded-[2px] border border-[#cfcfcf] bg-white pl-[3px] text-[12px] text-[#222]">-<div className="ml-auto mr-[4px] h-0 w-0 border-x-[4px] border-t-[5px] border-x-transparent border-t-black" /></div>
            <Cell n="pct" w="w-[32px]" />
            <Cell n="sig" w="w-[32px]" c="ml-px" />
            <Cell n="magroi" w="w-[32px]" />
            <Radio w="w-[66px]" t="ROI" />
            <Cell n="polyx" w="w-[32px]" c="ml-px" />
            <Cell n="oplus" w="w-[32px]" />
            <Cell n="undoG" w="w-[32px]" c="ml-px" />
            <Lbl w="w-[23px]" t="Dist" c="ml-[4px]" />
            <Spin w="w-[96px]" v="0.010000" />
            <Lbl w="w-[21px]" t="Min" c="ml-[6px]" />
            <Spin w="w-[58px]" v="60" />
            <Lbl w="w-[23px]" t="Max" c="ml-[5px]" />
            <Spin w="w-[58px]" v="100" />
            <Cell n="magcolor" w="w-[32px]" />
            <Radio w="w-[75px]" t="Preview" c="ml-px" />
            <Cell n="colorplus" w="w-[32px]" />
            <Cell n="undoD" w="w-[32px]" c="ml-[2px]" />
            <Lbl w="w-[9px]" t="T" c="ml-[4px]" />
            <Spin w="w-[48px]" v="0" />
            <Lbl w="w-[9px]" t="S" c="ml-[5px]" />
            <Spin w="w-[58px]" v="200" />
            <Cell n="bin" w="w-[32px]" c="ml-px" />
            <Sep w="w-[15px]" />
            <Cell n="gridO" w="w-[28px]" />
            <Spin w="w-[58px]" v="0" c="ml-[2px]" />
            <Cell n="gbtn" w="w-[34px]" />
            <Spin w="w-[58px]" v="1" />
            <Cell n="gbtn" w="w-[34px]" />
            <Spin w="w-[58px]" v="2" />
            <Cell n="gbtn" w="w-[34px]" />
            <Cell n="lastg" w="w-[30px]" />
          </div>
          {/* main */}
          <div className="flex min-h-0 flex-1">
            {/* left toolbar */}
            <div className="flex w-[54px] shrink-0 flex-col border-r border-[#cfcfcf] pt-[6px]">
              <div className="ml-[4px] h-[3px] w-[46px] shrink-0 border-t-[3px] border-dotted border-[#e2e2e2]" />
              {[['vadd', 0], ['radd', 0], ['feather', 0], ['pg', 1], ['wms', 1], ['globe', 0], ['wfs', 1], ['comma', 0], ['vmap', 0], ['vstar', 1]].map(([n, t]) => (
                <div key={n as string} className="flex h-[33.3px] shrink-0 items-center pl-[7px]">
                  <Ico n={n as string} s={25} />
                  {t ? <Tri w="w-[12px]" c="ml-[3px]" /> : null}
                </div>
              ))}
              <div className="ml-[4px] mt-[8px] h-[3px] w-[46px] shrink-0 border-t-[3px] border-dotted border-[#e2e2e2]" />
            </div>
            {/* docks */}
            <div className="flex w-[475px] shrink-0 flex-col pl-px">
              <DockHead t="Layers Panel" />
              <div className="flex h-[30px] shrink-0 items-center pb-[3px]">
                <Cell n="brush" w="w-[26px]" s={17} c="ml-[2px]" />
                <Cell n="addg" w="w-[28px]" s={17} />
                <Cell n="eye" w="w-[26px]" s={18} />
                <Cell n="funnel" w="w-[25px]" s={17} />
                <Cell n="expr" w="w-[25px]" s={16} />
                <Tri gray w="w-[14px]" />
                <Cell n="expand" w="w-[24px]" s={17} c="ml-[2px]" />
                <Cell n="collapse" w="w-[27px]" s={17} />
                <Cell n="remove" w="w-[25px]" s={16} />
              </div>
              <div className="relative flex h-[314px] w-[474px] shrink-0 flex-col border-2 border-[#389ddb] bg-white">
                <div className="absolute left-[7px] top-[11px] h-[173px] w-0 border-l border-dotted border-[#aaa]" />
                <div className="absolute left-[27px] top-[29px] h-[50px] w-0 border-l border-dotted border-[#aaa]" />
                <div className="absolute left-[27px] top-[196px] h-[24px] w-0 border-l border-dotted border-[#aaa]" />
                <Row h="h-[20px]" d={0} ex="o" x={1} ic={<S s={25}>{group}</S>} t="Divisão Política" />
                <Row h="h-[19px]" d={1} ex="c" x={2} ic={<S s={22}>{blob}</S>} t="Estados (IBGE)" b />
                <Row h="h-[17px]" d={1} iw="w-[29px]" ic={<div className="h-[16px] w-[17px] border-x border-[#e89a9a]" />} t="Municípios (IBGE)" b />
                <Row h="h-[18px]" d={1} ex="c" ic={<S s={22}>{blob}</S>} t="Biomas" b />
                {['Uso e Cobertura', 'Solos', 'Declividade', 'Clima', 'Infraestrutura'].map((t) => (
                  <Row key={t} h="h-[19.5px]" d={0} ex="c" ic={<S s={25}>{group}</S>} t={t} />
                ))}
                <Row h="h-[19.5px]" d={0} ex="o" ic={<S s={25}>{group}</S>} t="Fundo" />
                <Row h="h-[19px]" d={1} ic={<S s={21}>{I.tile}</S>} t="OpenStreetMap" b />
                <Row h="h-[17px]" d={1} iw="w-[6px]" t="Bing Aerial with labels" b />
              </div>
              <div className="flex h-[5px] shrink-0 items-center justify-center"><div className="mr-[40px] w-[152px] border-t-[2px] border-dotted border-[#d8d8d8]" /></div>
              <DockHead t="SCP Dock" />
              {/* SCP input */}
              <div className="mt-[9px] pl-[7px]"><TabShape /></div>
              <div className="ml-[11px] mt-[-17px] h-[21px] shrink-0 text-[12.4px] font-bold leading-[18px] text-[#111]">SCP input</div>
              <div className="ml-[17px] mt-[8px] flex h-[331px] w-[438px] shrink-0 flex-col rounded-[2px] border-[1.5px] border-[#cfcfcf] pl-[9px] pt-[9px]">
                <Band w="w-[417px]" h="h-[16px]" t="Input image" c="pl-[8px]" />
                <div className="mt-[6px] flex h-[28px] items-center">
                  <SBtn n="yg" />
                  <div className="ml-[6px]"><SBtn n="stack" /></div>
                  <div className="ml-[7px] flex h-[21px] w-[313px] items-center overflow-hidden rounded-[3px] border border-[#cfcfcf] bg-[linear-gradient(#f8f8f8_0_20%,#ececec_20%)]">
                    <div className="ml-auto flex h-full w-[16px] items-center justify-center border-l border-[#cfcfcf] bg-[#f4f4f4]"><div className="h-0 w-0 border-x-[4px] border-t-[5px] border-x-transparent border-t-black" /></div>
                  </div>
                  <div className="ml-[7px]"><SBtn n="undoB" s={20} /></div>
                </div>
                <Band w="w-[417px]" h="h-[17px]" t="Training input" c="pl-[8px] mt-[7px]" />
                <div className="mt-[6px] flex h-[28px] items-center">
                  <SBtn n="yg" />
                  <div className="ml-[6px]"><SBtn n="newroi" s={20} /></div>
                  <div className="ml-[7px] h-[21px] w-[348px] rounded-[3px] border border-[#cfcfcf] bg-white" />
                </div>
                <div className="ml-[76px] mt-[7px] flex h-[28px] gap-[6px]">
                  {['download', 'cluster', 'arrowin', 'redout', 'calc', 'tools', 'bookt', 'gear'].map((n) => <SBtn key={n} n={n} />)}
                </div>
                <Band w="w-[417px]" h="h-[17px]" t="SCP news" c="pl-[8px] mt-[6px]" />
                {/* news */}
                <div className="mt-[5px] flex h-[139px] w-[417px] rounded-[2px] border-2 border-[#d6d6d6]">
                  <div className="min-w-0 flex-1 overflow-hidden pl-[4px] pt-[4px] text-[12.6px] font-bold leading-[17px] text-[#111]">
                    <div>Plugin</div>
                    <div className="mt-[2px] whitespace-nowrap"><Hash />New release: Semi-Automatic OS v. 6<A t=" Read more" /></div>
                    <div className="mt-[3px]"><Hash />Tutorial: Cloud Masking, Image Mosaic, and Land Cover<br />Change Location<A t=" Read more" /></div>
                    <div className="mt-[14px]">Services</div>
                    <div className="mt-[3px] whitespace-nowrap text-[12px] font-normal"><Hash />Landsat download: OK</div>
                  </div>
                  <div className="flex w-[16px] shrink-0 flex-col">
                    <div className="flex h-[16px] items-center justify-center rounded-[2px] border border-[#bbb] bg-white"><div className="h-0 w-0 border-x-[4px] border-b-[5px] border-x-transparent border-b-black" /></div>
                    <div className="h-[35px] rounded-[2px] border border-[#bbb] bg-[#f0f0f0]" />
                    <div className="flex-1" />
                    <div className="flex h-[15px] items-center justify-center rounded-[2px] border border-[#bbb] bg-white"><div className="h-0 w-0 border-x-[4px] border-b-[5px] border-x-transparent border-b-black" /></div>
                    <div className="flex h-[15px] items-center justify-center rounded-[2px] border border-[#bbb] bg-white"><div className="h-0 w-0 border-x-[4px] border-t-[5px] border-x-transparent border-t-black" /></div>
                  </div>
                </div>
              </div>
              <div className="mt-[10px] pl-[7px]"><TabShape /></div>
              <div className="ml-[11px] mt-[-19px] text-[12px] leading-[18px] text-[#222]">Classification dock</div>
            </div>
            {/* splitter */}
            <div className="flex w-[5px] shrink-0 items-center justify-center"><div className="h-[266px] w-0 border-l-2 border-dotted border-[#dcdcdc]" /></div>
            {/* map */}
            <div className="relative flex-1 overflow-hidden rounded-[2px] border border-[#d0d0d0] bg-white">
              <BrazilMap />
              <svg width="31" height="66" viewBox="0 0 31 66" className="absolute bottom-[26px] right-0">
                <path d="M4 0H31V66L10 52 2 49 0 44V4z" fill="#5d5d5d" />
                <rect x="5" y="8" width="26" height="26" fill="#0c3f7c" />
                <circle cx="18" cy="21" r="12" fill="#6e7f92" />
                <path d="M9 21h18M9 21l5-4v8zM27 21l-5-4v8z" stroke="#0c3f7c" fill="#0c3f7c" strokeWidth="1.6" />
              </svg>
            </div>
          </div>
          {/* status bar */}
          <div className="flex h-[34px] shrink-0 items-center pl-[811px] pt-[1px]">
            <Lbl w="w-[64px]" t="Coordinate" />
            <div className="flex h-[21px] w-[247px] shrink-0 items-center justify-center rounded-[2px] border border-[#cfcfcf] bg-white text-[12px] text-[#222]">-4388168,538941</div>
            <Cell n="rpen" w="w-[36px]" s={20} />
            <Lbl w="w-[33px]" t="Scale" c="ml-[5px]" />
            <div className="flex h-[21px] w-[97px] shrink-0 items-center rounded-[2px] border border-[#cfcfcf] bg-white pl-[2px] text-[12px] text-[#222]">1:27,557,824<div className="ml-auto flex h-full w-[15px] items-center justify-center border-l border-[#d5d5d5] bg-[#f2f2f2]"><div className="h-0 w-0 border-x-[4px] border-t-[5px] border-x-transparent border-t-black" /></div></div>
            <Cell n="lockpad" w="w-[28px]" s={18} />
            <Lbl w="w-[56px]" t="Magnifier" c="ml-[7px]" />
            <Spin w="w-[79px]" v="100%" />
            <Lbl w="w-[54px]" t="Rotation" c="ml-[9px]" />
            <Spin w="w-[79px]" v="0.0" />
            <div className="ml-[6px] w-[15px] shrink-0"><svg width="13" height="13" viewBox="0 0 13 13"><path d="M2 2l9 9M11 2l-9 9" stroke="#000" strokeWidth="2.6" /></svg></div>
            <Lbl w="w-[56px]" t="Render" c="ml-[6px]" />
            <Cell n="epsg" w="w-[20px]" s={18} />
            <Lbl w="w-[104px]" t="EPSG:3857 (OTF)" c="ml-[6px]" />
            <Cell n="chat" w="w-[28px]" s={22} c="ml-[12px]" />
          </div>
        </div>
        <div className="flex-1" />
      </div>
      {/* taskbar */}
      <div className="flex h-[49px] shrink-0 items-center bg-black text-[14px] text-[#e8e8e8]">
        <Task w="w-[50px]" c="ml-[29px]"><svg width="22" height="22" viewBox="0 0 22 22"><path d="M1 4l8.500-1.200V10.500H1zM10.500 2.600L21 1v9.500H10.500zM1 11.500h8.500v7.700L1 18zM10.500 11.500H21V21l-10.500-1.500z" fill="#fff" /></svg></Task>
        <Task w="w-[50px]" c="ml-[9px]"><svg width="22" height="24" viewBox="0 0 22 24"><circle cx="13" cy="9" r="7" fill="none" stroke="#ddd" strokeWidth="1.5" /><path d="M8 15L3 22" stroke="#ddd" strokeWidth="1.6" /></svg></Task>
        <Task w="w-[50px]" c="ml-[6px]"><svg width="22" height="24" viewBox="0 0 22 24"><path d="M3 2h12M3 22h12M3 7h12v10H3zM19 3v7M19 14v7" fill="none" stroke="#ddd" strokeWidth="1.5" /><circle cx="19" cy="12" r="1.5" fill="#ddd" /></svg></Task>
        <Task w="w-[50px]" c="ml-[15px]" line><svg width="32" height="34" viewBox="0 0 32 34"><text x="16" y="27" fontSize="36" fontWeight="700" textAnchor="middle" fill="#0f7bd8" fontFamily="'Liberation Sans'">e</text></svg></Task>
        <Task w="w-[50px]" c="ml-[10px]" line><svg width="28" height="30" viewBox="0 0 28 30"><path d="M2 2h24v24H2z" fill="#f7dc7c" /><path d="M2 1h16v3H2z" fill="#e6bf35" /><path d="M8 18h12v9H8z" fill="#55a9e0" /><path d="M6 18h16v3H6z" fill="#2f7fc0" /></svg></Task>
        <Task w="w-[50px]" c="ml-[10px]"><svg width="30" height="30" viewBox="0 0 30 30"><path d="M1 12L15 0l14 12v17H1z" fill="#fff" /><path d="M1 11l14 10 14-10-14 5z" fill="#000" /><path d="M18 15l10 13" stroke="#000" strokeWidth="2" /></svg></Task>
        <Task w="w-[50px]" c="ml-[10px]"><svg width="28" height="28" viewBox="0 0 28 28"><circle cx="14" cy="14" r="13.500" fill="#dd4b39" /><path d="M14 14L2 7a13.500 13.500 0 0 0 11 20.500z" fill="#3aa757" /><path d="M14 14l12-6a13.500 13.500 0 0 1-13 19.500z" fill="#fbc02d" /><circle cx="14" cy="14" r="6.500" fill="#fff" /><circle cx="14" cy="14" r="5" fill="#4a86e8" /></svg></Task>
        <Task w="w-[50px]" c="ml-[11px]"><svg width="28" height="30" viewBox="0 0 28 30"><circle cx="14" cy="16" r="13" fill="#e66b1f" /><path d="M16 2c6 3 9 8 9 14-3-6-6-10-9-14z" fill="#f5c026" /><circle cx="13" cy="16" r="7" fill="#2b3fa0" /><path d="M10 10c6-2 8 3 5 6s-7 1-7 6c-3-5-1-10 2-12z" fill="#f39c1f" /></svg></Task>
        <Task w="w-[50px]" c="ml-[9px]"><svg width="28" height="34" viewBox="0 0 28 34"><path d="M9 8V5a5 5 0 0 1 10 0v3" fill="none" stroke="#fff" strokeWidth="1.5" /><rect x="0" y="8" width="28" height="26" fill="#fff" /><rect x="8" y="14" width="5.500" height="5.500" fill="#f25022" /><rect x="14.500" y="14" width="5.500" height="5.500" fill="#7fba00" /><rect x="8" y="20.500" width="5.500" height="5.500" fill="#00a4ef" /><rect x="14.500" y="20.500" width="5.500" height="5.500" fill="#ffb900" /></svg></Task>
        <Task w="w-[50px]" c="ml-[9px]"><svg width="26" height="32" viewBox="0 0 26 32"><path d="M13 1l12 7v7L14 31H12L1 15V8z" fill="#b8c6d8" /><path d="M13 1l12 7-12 7L1 8z" fill="#2c5a96" /><path d="M5 10l8 5v12z" fill="#f2f2f2" /><path d="M21 10l-8 5v12z" fill="#7c9cc4" /></svg></Task>
        <Task w="w-[50px]" c="ml-[13px]"><svg width="28" height="30" viewBox="0 0 28 30"><path d="M4 3h20v18H4z" fill="#eee" stroke="#aaa" /><path d="M7 15l3-6 3 8 3-5 2 2 3-3" fill="none" stroke="#3a7bc8" /><path d="M10 23h8v5h-8z" fill="#bbb" /><ellipse cx="14" cy="27" rx="6" ry="2" fill="#ddd" /></svg></Task>
        <Task w="w-[58px]" c="ml-[7px] bg-[#333333]" line><svg width="22" height="30" viewBox="0 0 22 30"><ellipse cx="11" cy="15" rx="8" ry="12" fill="none" stroke="#d9e84a" strokeWidth="4" /><path d="M12 17l7 12M15 1l-3 7" stroke="#3f7a22" strokeWidth="2" /></svg></Task>
        <Task w="w-[49px]" c="ml-[7px]" line><svg width="26" height="32" viewBox="0 0 26 32"><path d="M1 4h20v24H1z" fill="#d8e6c2" stroke="#888" /><path d="M4 20l5-8 4 5 3-3 3 6v4H4z" fill="#3f8f3a" /><path d="M24 1l-7 17" stroke="#c9a33c" strokeWidth="2" /></svg></Task>
        <Task w="w-[49px]" c="ml-[11px]" line><svg width="28" height="32" viewBox="0 0 28 32"><rect width="28" height="32" fill="#c9101a" /><path d="M6 25c4-2 8-12 7-18-2 4 3 14 10 14-6-1-14 0-17 4z" fill="none" stroke="#fff" strokeWidth="1.6" /></svg></Task>
        <Task w="w-[59px]" c="ml-[7px] bg-[#2b2b2b]" line><svg width="30" height="30" viewBox="0 0 30 30"><circle cx="16" cy="15" r="14" fill="#d9532c" /><rect x="1" y="7" width="16" height="16" rx="2" fill="#b7371a" /><text x="9" y="20" fontSize="13" fontWeight="700" textAnchor="middle" fill="#fff" fontFamily="'Liberation Sans'">P</text></svg></Task>
        <Task w="w-[51px]" c="ml-[6px]" line><svg width="28" height="34" viewBox="0 0 28 34"><rect width="28" height="34" rx="2" fill="#1f5f8f" /><path d="M6 6c6 1 10 5 12 14l2 8c-3-8-6-13-13-15 2 3 3 6 3 8-3-4-5-9-4-15zM19 6l3 3-1 5-2-3z" fill="#bcd7ea" /></svg></Task>
        <div className="flex-1" />
        <div className="flex w-[30px] shrink-0 justify-center"><svg width="22" height="24" viewBox="0 0 22 24"><circle cx="7" cy="10" r="3" fill="none" stroke="#ddd" strokeWidth="1.4" /><circle cx="15" cy="6" r="3.500" fill="none" stroke="#ddd" strokeWidth="1.4" /><path d="M2 21c0-4 2-7 5-7s5 3 5 7M12 12c4-1 7 2 7 5" fill="none" stroke="#ddd" strokeWidth="1.4" /></svg></div>
        <div className="ml-[18px] flex w-[30px] shrink-0 justify-center"><svg width="16" height="10" viewBox="0 0 16 10"><path d="M1 9l7-7 7 7" fill="none" stroke="#ddd" strokeWidth="1.5" /></svg></div>
        <div className="ml-[13px] flex w-[30px] shrink-0 justify-center"><svg width="18" height="18" viewBox="0 0 18 18"><path d="M1 17C1 9 7 3 15 1M5 17c0-5 4-9 9-11M9 17c0-3 2-5 5-6" fill="none" stroke="#bbb" strokeWidth="1.3" /><circle cx="13" cy="16" r="1.5" fill="#ddd" /></svg></div>
        <div className="ml-[5px] flex w-[30px] shrink-0 justify-center"><svg width="18" height="16" viewBox="0 0 18 16"><path d="M1 5h3l4-3v12l-4-3H1zM11 5l5 6M16 5l-5 6" fill="none" stroke="#ddd" strokeWidth="1.2" /></svg></div>
        <div className="ml-[13px] flex w-[30px] shrink-0 justify-center"><svg width="20" height="22" viewBox="0 0 20 22"><path d="M1 21l3-6 9-12c2-2 5 0 4 3L8 18zM11 6l4 3" fill="none" stroke="#ddd" strokeWidth="1.3" /><circle cx="6" cy="16" r="3" fill="none" stroke="#ddd" /></svg></div>
        <div className="ml-[13px] flex w-[40px] shrink-0 flex-col items-center gap-[4px] leading-[17px]"><div>ENG</div><div>INTL</div></div>
        <div className="ml-[2px] flex w-[78px] shrink-0 flex-col items-center gap-[4px] leading-[17px]"><div>8:51 AM</div><div>8/2/2019</div></div>
        <div className="ml-[13px] flex w-[30px] shrink-0 justify-center"><svg width="20" height="20" viewBox="0 0 20 20"><path d="M1 1h18v14h-8l-2 3-2-3H1z" fill="none" stroke="#ddd" strokeWidth="1.3" /></svg></div>
        <div className="ml-[19px] mr-[29px] h-full w-px bg-[#333]" />
      </div>
    </div>
  );
}
